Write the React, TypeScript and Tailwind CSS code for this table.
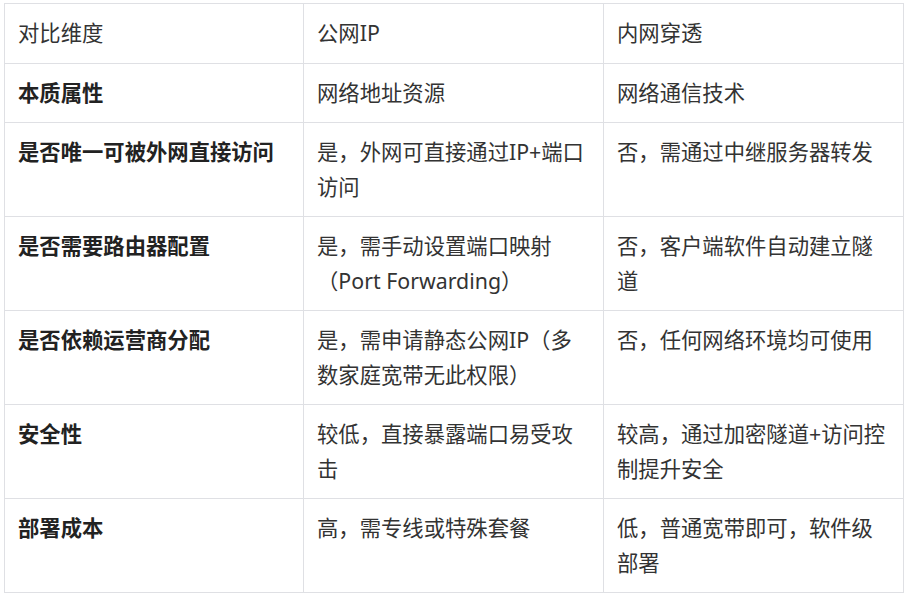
/**
 * Comparison table: 公网IP vs 内网穿透
 */

const rows: [string, string, string][] = [
  ['本质属性', '网络地址资源', '网络通信技术'],
  ['是否唯一可被外网直接访问', '是，外网可直接通过IP+端口访问', '否，需通过中继服务器转发'],
  ['是否需要路由器配置', '是，需手动设置端口映射（Port Forwarding）', '否，客户端软件自动建立隧道'],
  ['是否依赖运营商分配', '是，需申请静态公网IP（多数家庭宽带无此权限）', '否，任何网络环境均可使用'],
  ['安全性', '较低，直接暴露端口易受攻击', '较高，通过加密隧道+访问控制提升安全'],
  ['部署成本', '高，需专线或特殊套餐', '低，普通宽带即可，软件级部署'],
];

const cell = 'border border-[#dfe0e4] px-[13px] py-[12px] align-top leading-[34.5px]';

export default function App() {
  return (
    <div
      className="min-h-screen bg-white pl-[4px] pt-[3px] text-[21.33px] text-[#333333]"
      style={{ fontFamily: '"Noto Sans", "Noto Sans CJK SC", sans-serif' }}
    >
      <table className="w-[899px] table-fixed border-collapse">
        <colgroup>
          <col className="w-[299px]" />
          <col className="w-[300px]" />
          <col className="w-[300px]" />
        </colgroup>
        <thead>
          <tr>
            <th className={`${cell} text-left font-normal`}>对比维度</th>
            <th className={`${cell} text-left font-normal`}>公网IP</th>
            <th className={`${cell} text-left font-normal`}>内网穿透</th>
          </tr>
        </thead>
        <tbody>
          {rows.map(([dim, pub, tunnel]) => (
            <tr key={dim}>
              <td className={`${cell} font-bold text-[#222222]`}>{dim}</td>
              <td className={cell}>{pub}</td>
              <td className={cell}>{tunnel}</td>
            </tr>
          ))}
        </tbody>
      </table>
    </div>
  );
}
